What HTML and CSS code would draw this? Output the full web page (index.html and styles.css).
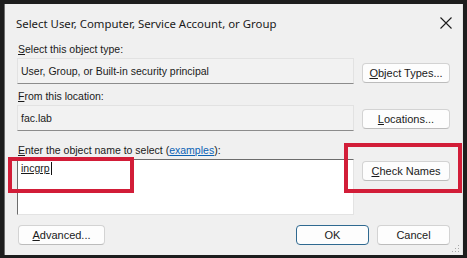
FILE: index.html
```html
<!DOCTYPE html>
<html lang="en">
<head>
    <meta charset="UTF-8">
    <title>Select User, Computer, Service Account, or Group</title>
    <link rel="stylesheet" href="styles.css">
</head>
<body>
    <div class="dialog">
        <div class="titlebar">
            <span class="title">Select User, Computer, Service Account, or Group</span>
            <svg class="close" width="12" height="12" viewBox="0 0 12 12">
                <path d="M0.5 0.5 L11.5 11.5 M11.5 0.5 L0.5 11.5" stroke="#1b1b1b" stroke-width="1.1" fill="none"/>
            </svg>
        </div>

        <div class="content">
            <div class="label"><u>S</u>elect this object type:</div>
            <div class="row">
                <div class="field">User, Group, or Built-in security principal</div>
                <button class="btn btn-row1"><u>O</u>bject Types...</button>
            </div>

            <div class="label label-2"><u>F</u>rom this location:</div>
            <div class="row">
                <div class="field">fac.lab</div>
                <button class="btn btn-row2"><u>L</u>ocations...</button>
            </div>

            <div class="label label-3"><u>E</u>nter the object name to select (<a class="link" href="#">examples</a>):</div>
            <div class="row">
                <div class="names"><span class="resolved">incgrp</span><span class="caret"></span></div>
                <button class="btn btn-row3"><u>C</u>heck Names</button>
            </div>

            <div class="actions">
                <button class="btn btn-wide"><u>A</u>dvanced...</button>
                <div class="actions-right">
                    <button class="btn btn-small btn-default">OK</button>
                    <button class="btn btn-small">Cancel</button>
                </div>
            </div>
        </div>

        <svg class="grip" width="8" height="8" viewBox="0 0 8 8">
            <rect x="6" y="0" width="1" height="1" fill="#a8a8a8"/>
            <rect x="3" y="3" width="1" height="1" fill="#a8a8a8"/>
            <rect x="6" y="3" width="1" height="1" fill="#a8a8a8"/>
            <rect x="0" y="6" width="1" height="1" fill="#a8a8a8"/>
            <rect x="3" y="6" width="1" height="1" fill="#a8a8a8"/>
            <rect x="6" y="6" width="1" height="1" fill="#a8a8a8"/>
        </svg>

        <!-- annotation boxes drawn over the dialog -->
        <div class="mark mark-input"></div>
        <div class="mark mark-button"></div>
    </div>
</body>
</html>
```

FILE: styles.css
```css
* {
    box-sizing: border-box;
    margin: 0;
    padding: 0;
}
body {
    width: 467px;
    height: 258px;
    overflow: hidden;
    background-color: #1d1d1d;
    padding: 4px 4px 3px 4px;
    font-family: 'Liberation Sans', Arial, sans-serif;
    font-size: 10.5px;
    color: #1a1a1a;
}

.dialog {
    position: relative;
    width: 459px;
    height: 251px;
    background-color: #f0f0f0;
    border-left: 1px solid #6e6e6e;
    border-right: 1px solid #e4e4e4;
}

.titlebar {
    height: 38px;
    display: flex;
    align-items: center;
    justify-content: space-between;
    padding: 0 10px 0 11px;
}
.title {
    font-family: 'Noto Sans', 'Open Sans', sans-serif;
    font-size: 11.4px;
    color: #1a1a1a;
    margin-top: 1px;
}
.close {
    margin-top: -1px;
}

.content {
    padding: 0 12px;
}

.label {
    height: 14px;
    line-height: 15px;
    padding-left: 1px;
}
.label-2 {
    margin-top: 5px;
}
.label-3 {
    margin-top: 12px;
}
.link {
    color: #0b62b5;
}

.row {
    display: flex;
    gap: 8px;
    margin-top: 2px;
}

.field {
    width: 337px;
    height: 26px;
    line-height: 24px;
    padding-left: 3px;
    background-color: #f2f2f2;
    border: 1px solid #e2e2e2;
    border-bottom-color: #8c8c8c;
}

.names {
    width: 337px;
    height: 56px;
    padding: 2px 0 0 3px;
    background-color: #ffffff;
    border: 1px solid #e3e3e3;
    border-top-color: #6c6c6c;
    border-left-color: #6c6c6c;
    display: flex;
    align-items: flex-start;
}
.resolved {
    text-decoration: underline;
    line-height: 13px;
}
.caret {
    width: 1px;
    height: 13px;
    background-color: #111111;
    margin-left: 1px;
}

.btn {
    width: 88px;
    height: 20px;
    font-family: 'Liberation Sans', Arial, sans-serif;
    font-size: 11px;
    color: #1a1a1a;
    background-color: #fdfdfd;
    border: 1px solid #d3d3d3;
    border-bottom-color: #bcbcbc;
    border-radius: 4px;
}
.btn-row1 {
    margin-top: 5px;
}
.btn-row2 {
    margin-top: 4px;
}
.btn-row3 {
    margin-top: 2px;
}
.btn-wide {
    width: 87px;
}
.btn-small {
    width: 73px;
}
.btn-default {
    border-color: #2f6990;
}

.actions {
    display: flex;
    justify-content: space-between;
    margin-top: 10px;
    padding-left: 1px;
}
.actions-right {
    display: flex;
    gap: 8px;
}

.grip {
    position: absolute;
    right: 2px;
    bottom: 2px;
}

.mark {
    position: absolute;
    border: 4px solid #d21d38;
}
.mark-input {
    left: 3px;
    top: 153px;
    width: 126px;
    height: 36px;
}
.mark-button {
    left: 339px;
    top: 139px;
    width: 118px;
    height: 50px;
}
```
